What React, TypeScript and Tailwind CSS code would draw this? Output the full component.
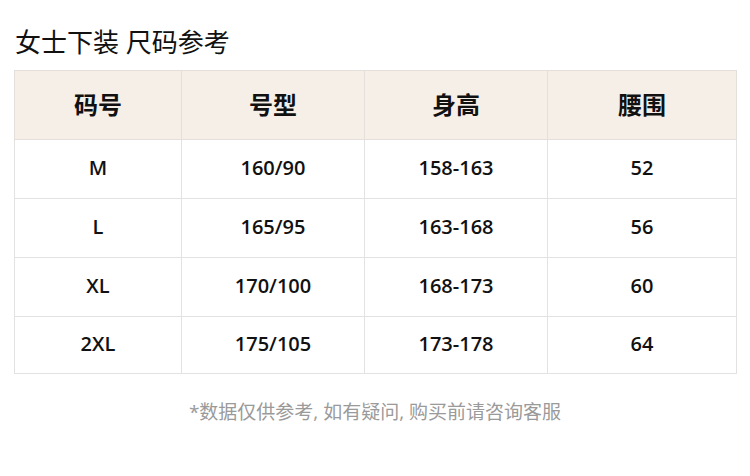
const headers = ["码号", "号型", "身高", "腰围"];

const rows = [
  ["M", "160/90", "158-163", "52"],
  ["L", "165/95", "163-168", "56"],
  ["XL", "170/100", "168-173", "60"],
  ["2XL", "175/105", "173-178", "64"],
];

export default function App() {
  return (
    <div
      className="w-[750px] h-[476px] bg-white text-[#111]"
      style={{ fontFamily: '"Open Sans", "Noto Sans CJK SC", sans-serif' }}
    >
      <h1 className="pl-[15px] pt-[27px] text-[26px] leading-[30px] font-normal">女士下装 尺码参考</h1>

      <table className="mt-[13px] ml-[14px] w-[723px] border-collapse table-fixed">
        <colgroup>
          <col className="w-[167px]" />
          <col className="w-[183px]" />
          <col className="w-[183px]" />
          <col />
        </colgroup>
        <thead>
          <tr className="bg-[#f6efe8] h-[69px]">
            {headers.map((h) => (
              <th key={h} className="border border-[#e4dfda] text-[24px] font-bold text-center">
                {h}
              </th>
            ))}
          </tr>
        </thead>
        <tbody>
          {rows.map((r, i) => (
            <tr key={i} className={i === rows.length - 1 ? "h-[57px]" : "h-[59px]"}>
              {r.map((c, j) => (
                <td key={j} className="border border-[#e2e2e2] text-center text-[20px] font-semibold pb-[3px]">
                  {c}
                </td>
              ))}
            </tr>
          ))}
        </tbody>
      </table>

      <p className="mt-[24px] text-center text-[19px] text-[#9a9a9a]">
        *数据仅供参考, 如有疑问, 购买前请咨询客服
      </p>
    </div>
  );
}
